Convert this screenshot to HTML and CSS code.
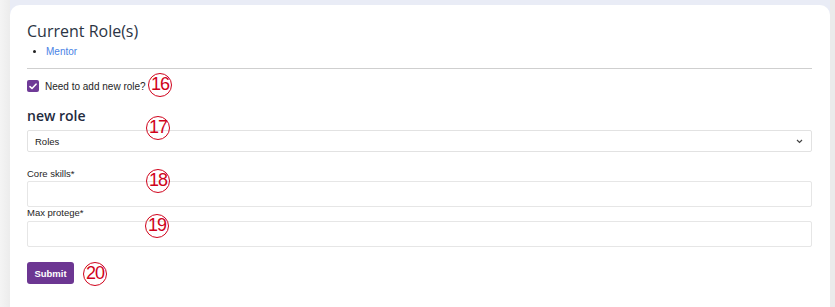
FILE: index.html
```html
<!DOCTYPE html>
<html>
<head>
<meta charset="utf-8">
<link rel="stylesheet" href="styles.css">
</head>
<body>
<div class="page">
  <div class="side-left"></div>
  <main class="card">
    <h2 class="title">Current Role(s)</h2>
    <ul class="roles">
      <li><a class="role-link">Mentor</a></li>
    </ul>
    <hr class="divider">
    <label class="check-row">
      <span class="checkbox">
        <svg width="8" height="7" viewBox="0 0 8 7"><path d="M1 3.6 L3 5.5 L7 1.2" fill="none" stroke="#fff" stroke-width="1.6" stroke-linecap="round" stroke-linejoin="round"/></svg>
      </span>
      <span class="check-label">Need to add new role?</span>
    </label>
    <h3 class="sub">new role</h3>
    <div class="select">
      <span>Roles</span>
      <svg width="7" height="5" viewBox="0 0 7 5"><path d="M1 1 L3.5 3.5 L6 1" fill="none" stroke="#444" stroke-width="1.2"/></svg>
    </div>
    <label class="lbl lbl-first">Core skills*</label>
    <div class="input input-first"></div>
    <label class="lbl lbl-second">Max protege*</label>
    <div class="input input-second"></div>
    <button class="btn">Submit</button>

    <span class="badge b16">16</span>
    <span class="badge b17">17</span>
    <span class="badge b18">18</span>
    <span class="badge b19">19</span>
    <span class="badge b20">20</span>
  </main>
  <div class="side-right"></div>
</div>
</body>
</html>
```
FILE: styles.css
```css
html, body { margin: 0; padding: 0; }
body {
  background: #e9ecf6;
  font-family: "Liberation Sans", Arial, sans-serif;
  color: #222;
  overflow: hidden;
  height: 307px;
}
.page {
  display: grid;
  grid-template-columns: 10px 1fr 5px;
  height: 307px;
}
.side-left {
  background: linear-gradient(to right, #f4f4f4, #ececec);
}
.side-right {
  background: #ebebeb;
}
.card {
  position: relative;
  margin-top: 5px;
  background: #fff;
  border-radius: 10px 10px 0 0;
  padding: 15px 18px 0 17px;
}
.title {
  margin: 0;
  font-family: "Open Sans", sans-serif;
  font-weight: 400;
  font-size: 16px;
  line-height: 22px;
  color: #2b3444;
}
.roles {
  margin: 4px 0 0;
  padding-left: 19px;
  font-size: 10px;
  line-height: 12px;
}
.role-link { color: #4a83e6; }
.divider {
  margin: 10px 0 0;
  border: 0;
  border-top: 1px solid #cfcfcf;
}
.check-row {
  display: flex;
  align-items: center;
  gap: 6px;
  margin-top: 10px;
  height: 14px;
}
.checkbox {
  width: 12px;
  height: 12px;
  border-radius: 2px;
  background: #6f3a97;
  display: flex;
  align-items: center;
  justify-content: center;
}
.check-label {
  font-size: 10px;
  color: #1e1e1e;
}
.sub {
  margin: 13px 0 0;
  font-family: "Open Sans", sans-serif;
  font-weight: 600;
  font-size: 14px;
  line-height: 20px;
  color: #1f2b40;
}
.select {
  box-sizing: border-box;
  margin-top: 4px;
  height: 22px;
  border: 1px solid #e2e2e2;
  border-radius: 2px;
  display: flex;
  align-items: center;
  justify-content: space-between;
  padding: 0 8px 0 7px;
  font-size: 9.5px;
  color: #222;
}
.lbl {
  display: block;
  font-size: 9.5px;
  line-height: 12px;
  color: #1e1e1e;
}
.lbl-first { margin-top: 16px; }
.lbl-second { margin-top: 0; }
.input {
  box-sizing: border-box;
  height: 26px;
  border: 1px solid #e6e6e6;
  border-radius: 2px;
}
.input-first { margin-top: 1px; }
.input-second { margin-top: 2px; }
.btn {
  display: block;
  margin-top: 15px;
  width: 47px;
  height: 22px;
  border: 0;
  border-radius: 3px;
  background: #6c3692;
  color: #fff;
  font-family: "Liberation Sans", Arial, sans-serif;
  font-weight: 700;
  font-size: 9.5px;
  padding: 0;
}
.badge {
  position: absolute;
  box-sizing: border-box;
  width: 24px;
  height: 24px;
  border: 1.5px solid #d0021b;
  border-radius: 50%;
  color: #d0021b;
  font-family: "Liberation Sans", Arial, sans-serif;
  font-size: 18px;
  line-height: 21px;
  text-align: center;
  letter-spacing: -1px;
}
.b16 { left: 138px; top: 68px; }
.b17 { left: 136px; top: 111px; }
.b18 { left: 136px; top: 164px; }
.b19 { left: 135px; top: 209px; }
.b20 { left: 73px; top: 257px; }
```
